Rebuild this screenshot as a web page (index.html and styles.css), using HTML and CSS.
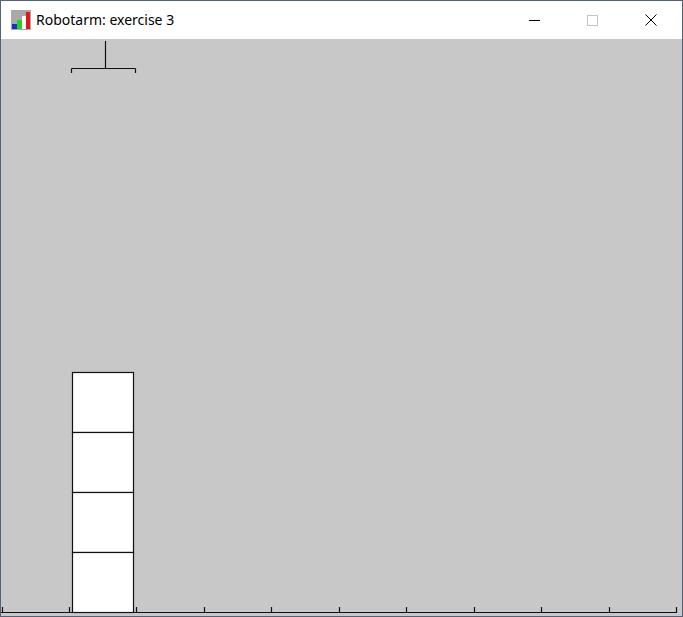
FILE: index.html
```html
<!DOCTYPE html>
<html>
<head>
<meta charset="utf-8">
<link rel="stylesheet" href="styles.css">
</head>
<body>
<div class="window">
  <div class="titlebar">
    <div class="app-icon">
      <svg width="20" height="20" viewBox="0 0 20 20">
        <rect x="0" y="0" width="20" height="20" fill="#a9a9a9"/>
        <rect x="1" y="14" width="5" height="5" fill="#1f2bd6"/>
        <rect x="6" y="10" width="5" height="9" fill="#22d322"/>
        <rect x="11" y="6" width="4" height="13" fill="#ffffff"/>
        <rect x="15" y="2" width="4" height="17" fill="#e01818"/>
      </svg>
    </div>
    <div class="title">Robotarm: exercise 3</div>
    <div class="controls">
      <div class="ctl">
        <svg width="12" height="12" viewBox="0 0 12 12"><line x1="0" y1="6.5" x2="11" y2="6.5" stroke="#000" stroke-width="1"/></svg>
      </div>
      <div class="ctl">
        <svg width="12" height="12" viewBox="0 0 12 12"><rect x="0.5" y="1.5" width="10" height="10" fill="none" stroke="#c4c4c4" stroke-width="1"/></svg>
      </div>
      <div class="ctl">
        <svg width="12" height="12" viewBox="0 0 12 12"><path d="M0.5 0.5 L11.5 11.5 M11.5 0.5 L0.5 11.5" stroke="#000" stroke-width="1"/></svg>
      </div>
    </div>
  </div>
  <div class="canvas">
    <svg class="scene" width="681" height="577" viewBox="0 0 681 577">
      <g stroke="#111" stroke-width="1.2" fill="none">
        <line x1="104.5" y1="2" x2="104.5" y2="29.5"/>
        <line x1="70.5" y1="29.5" x2="134.5" y2="29.5"/>
        <line x1="70.5" y1="29.5" x2="70.5" y2="34"/>
        <line x1="134.5" y1="29.5" x2="134.5" y2="34"/>
        <rect x="71.5" y="333.5" width="61" height="60" fill="#fff"/>
        <rect x="71.5" y="393.5" width="61" height="60" fill="#fff"/>
        <rect x="71.5" y="453.5" width="61" height="60" fill="#fff"/>
        <rect x="71.5" y="513.5" width="61" height="60" fill="#fff"/>
        <line x1="0" y1="573.5" x2="676" y2="573.5"/>
        <line x1="1.5" y1="568" x2="1.5" y2="574"/>
        <line x1="68.5" y1="568" x2="68.5" y2="574"/>
        <line x1="135.5" y1="568" x2="135.5" y2="574"/>
        <line x1="203.5" y1="568" x2="203.5" y2="574"/>
        <line x1="270.5" y1="568" x2="270.5" y2="574"/>
        <line x1="338.5" y1="568" x2="338.5" y2="574"/>
        <line x1="405.5" y1="568" x2="405.5" y2="574"/>
        <line x1="473.5" y1="568" x2="473.5" y2="574"/>
        <line x1="540.5" y1="568" x2="540.5" y2="574"/>
        <line x1="608.5" y1="568" x2="608.5" y2="574"/>
        <line x1="675.5" y1="568" x2="675.5" y2="574"/>
      </g>
    </svg>
  </div>
</div>
</body>
</html>
```
FILE: styles.css
```css
html, body {
  margin: 0;
  padding: 0;
  background: #ffffff;
}
.window {
  width: 683px;
  height: 617px;
  box-sizing: border-box;
  border: 1px solid #52627a;
  display: flex;
  flex-direction: column;
  font-family: "Noto Sans", "Open Sans", sans-serif;
}
.titlebar {
  height: 38px;
  flex: 0 0 38px;
  background: #ffffff;
  display: flex;
  align-items: center;
}
.app-icon {
  width: 20px;
  height: 20px;
  margin-left: 10px;
  display: flex;
}
.title {
  margin-left: 5px;
  font-size: 14px;
  color: #000;
  line-height: 18px;
}
.controls {
  margin-left: auto;
  margin-right: 2px;
  display: flex;
  height: 38px;
}
.ctl {
  width: 58px;
  height: 38px;
  display: flex;
  align-items: center;
  justify-content: center;
}
.canvas {
  flex: 1 1 auto;
  background: #c8c8c8;
  display: flex;
}
.scene {
  display: block;
}
```
